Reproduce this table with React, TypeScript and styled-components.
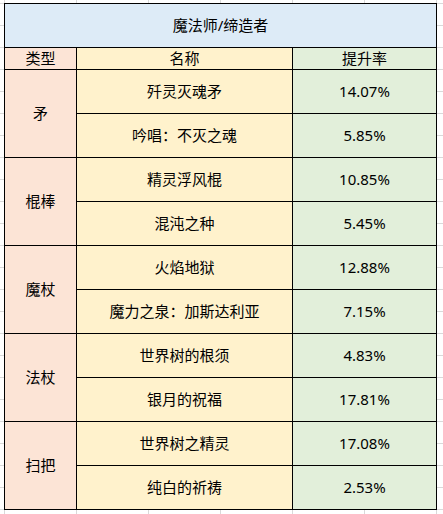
import React from "react";
import styled, { createGlobalStyle } from "styled-components";

const GlobalStyle = createGlobalStyle`
  html, body {
    margin: 0;
    padding: 0;
    height: 100%;
  }
  body {
    background-color: #ffffff;
    background-image:
      linear-gradient(to right, #d9d9d9 1px, transparent 1px),
      linear-gradient(to bottom, #d9d9d9 1px, transparent 1px);
    background-size: 72px 22px;
    background-position: 4px 3px;
    font-family: "Noto Sans", "Noto Sans CJK SC", sans-serif;
    color: #000;
  }
`;

const Sheet = styled.div`
  padding: 3px 0 0 4px;
`;

const Grid = styled.div`
  display: grid;
  width: 433px;
  box-sizing: border-box;
  grid-template-columns: 71px 215px 143px;
  grid-template-rows: 43px 21px repeat(10, 43px);
  gap: 1px;
  padding: 1px;
  background: #000;
`;

const tones = {
  blue: "#ddebf7",
  pink: "#fce4d6",
  yellow: "#fff2cc",
  green: "#e2efda",
};

type Tone = keyof typeof tones;

const Cell = styled.div<{ $tone: Tone; $rows?: number; $cols?: number }>`
  display: flex;
  align-items: center;
  justify-content: center;
  background: ${(p) => tones[p.$tone]};
  font-size: 15px;
  line-height: 1;
  white-space: nowrap;
  grid-row: span ${(p) => p.$rows ?? 1};
  grid-column: span ${(p) => p.$cols ?? 1};
`;

const groups: { type: string; items: [string, string][] }[] = [
  { type: "矛", items: [["歼灵灭魂矛", "14.07%"], ["吟唱：不灭之魂", "5.85%"]] },
  { type: "棍棒", items: [["精灵浮风棍", "10.85%"], ["混沌之种", "5.45%"]] },
  { type: "魔杖", items: [["火焰地狱", "12.88%"], ["魔力之泉：加斯达利亚", "7.15%"]] },
  { type: "法杖", items: [["世界树的根须", "4.83%"], ["银月的祝福", "17.81%"]] },
  { type: "扫把", items: [["世界树之精灵", "17.08%"], ["纯白的祈祷", "2.53%"]] },
];

export default function App() {
  return (
    <>
      <GlobalStyle />
      <Sheet>
        <Grid>
          <Cell $tone="blue" $cols={3}>魔法师/缔造者</Cell>
          <Cell $tone="pink">类型</Cell>
          <Cell $tone="yellow">名称</Cell>
          <Cell $tone="green">提升率</Cell>
          {groups.map((g) => (
            <React.Fragment key={g.type}>
              <Cell $tone="pink" $rows={2}>{g.type}</Cell>
              <Cell $tone="yellow">{g.items[0][0]}</Cell>
              <Cell $tone="green">{g.items[0][1]}</Cell>
              <Cell $tone="yellow">{g.items[1][0]}</Cell>
              <Cell $tone="green">{g.items[1][1]}</Cell>
            </React.Fragment>
          ))}
        </Grid>
      </Sheet>
    </>
  );
}
